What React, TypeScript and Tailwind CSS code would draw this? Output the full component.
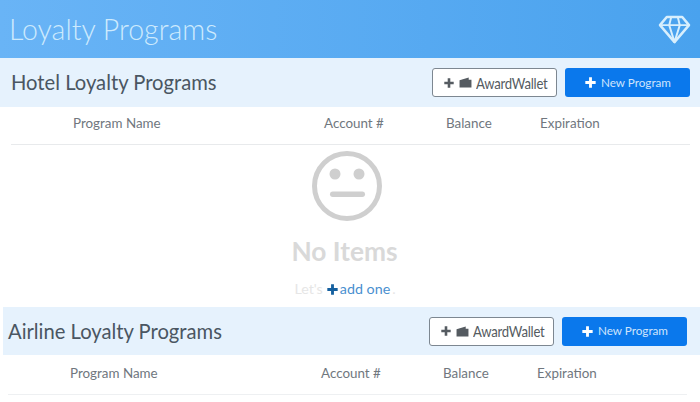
import React from "react";

const Plus = ({ className }: { className: string }) => (
  <svg viewBox="0 0 10 10" className={className} fill="currentColor" aria-hidden="true">
    <path d="M3.7 0.3h2.6v3.4h3.4v2.6H6.3v3.4H3.7V6.3H0.3V3.7h3.4z" />
  </svg>
);

const Wallet = () => (
  <svg viewBox="0 0 14 12" className="w-[13px] h-[11px] mr-[4px]" fill="#555b61" aria-hidden="true">
    <path d="M0.5 3.5L10.5 0.5V3H13.5V11.5H0.5z" />
  </svg>
);

const Diamond = () => (
  <svg viewBox="0 0 34 30" className="w-[33px] h-[29px]" fill="none" stroke="#d8effd" strokeWidth="2.6" strokeLinejoin="round" aria-hidden="true">
    <path d="M9 2H25L32 10.5L17 28L2 10.5Z" />
    <path d="M2 10.5H32M11.5 10.5L17 28L22.5 10.5M11.5 10.5L13.5 2.5M22.5 10.5L20.5 2.5" strokeWidth="2" />
  </svg>
);

const Face = () => (
  <svg viewBox="0 0 70 70" className="w-[70px] h-[70px]" aria-hidden="true">
    <circle cx="35" cy="35" r="32.5" fill="none" stroke="#cfcfcf" strokeWidth="5" />
    <circle cx="23" cy="23" r="5.5" fill="#cfcfcf" />
    <circle cx="47" cy="23" r="5.5" fill="#cfcfcf" />
    <rect x="18" y="40.5" width="35" height="5.5" rx="2.75" fill="#cfcfcf" />
  </svg>
);

const Section = ({ title, inset }: { title: string; inset: boolean }) => (
  <>
    <div className={inset ? "ml-[3px] h-[48px] bg-[#e6f2fd] flex items-center pl-[5px] pr-[13px]" : "h-[49px] bg-[#e6f2fd] flex items-center pl-[11px] pr-[10px]"}>
      <h2 className="text-[20.2px] text-[#4a5662] leading-none">{title}</h2>
      <div className="ml-auto flex gap-2">
        <button className="w-[125px] h-[29px] rounded-[3px] border border-[#7d8791] bg-white text-[#555b61] flex items-center pl-[11px] text-[16px] tracking-[-0.3px]">
          <Plus className="w-[10px] h-[10px] mr-[5px]" />
          <Wallet />
          <span className="block w-[72px] whitespace-nowrap origin-left scale-x-[0.82]">AwardWallet</span>
        </button>
        <button className="w-[125px] h-[29px] rounded-[3px] bg-[#0a78ec] text-[#cfe4fc] flex items-center justify-center gap-[5px] pl-[1px] text-[11.7px]">
          <Plus className="w-[11px] h-[11px] text-white" />
          <span>New Program</span>
        </button>
      </div>
    </div>
    <div className={inset ? "mr-[13px] ml-[8px] h-[40px] pb-[2px] border-b border-[#eef0f2] grid grid-cols-[62px_251px_122px_94px_1fr] items-center text-[13.4px] text-[#70777e]" : "mr-[10px] ml-[11px] h-[38px] pb-[4px] border-b border-[#e8eaec] grid grid-cols-[62px_251px_122px_94px_1fr] items-center text-[13.4px] text-[#70777e]"}>
      <span />
      <span>Program Name</span>
      <span>Account #</span>
      <span>Balance</span>
      <span>Expiration</span>
    </div>
  </>
);

export default function App() {
  return (
    <div className="w-[700px] h-[402px] overflow-hidden bg-white font-['Lato',sans-serif]">
      <header className="h-[58px] bg-gradient-to-r from-[#69b4f6] to-[#49a2ee] flex items-center justify-between pl-[9px] pr-[9px]">
        <h1 className="text-[28.5px] font-light text-[#cdeafd] leading-none">Loyalty Programs</h1>
        <Diamond />
      </header>
      <Section title="Hotel Loyalty Programs" inset={false} />
      <div className="h-[162px] flex flex-col items-center pt-[6px] pr-[6px]">
        <Face />
        <div className="mt-[14px] mr-[5px] text-[26.3px] font-bold text-[#d9d9d9] leading-[32px]">No Items</div>
        <div className="mt-[13px] mr-[4px] flex items-center text-[14.3px] leading-[18px] text-[#e6e6e6]">
          <span>Let's</span>
          <Plus className="w-[11px] h-[11px] text-[#15609f] ml-[4px] mr-[2px]" />
          <span className="text-[#4a90cf]">add one</span>
          <span className="ml-[2px]">.</span>
        </div>
      </div>
      <Section title="Airline Loyalty Programs" inset={true} />
    </div>
  );
}
